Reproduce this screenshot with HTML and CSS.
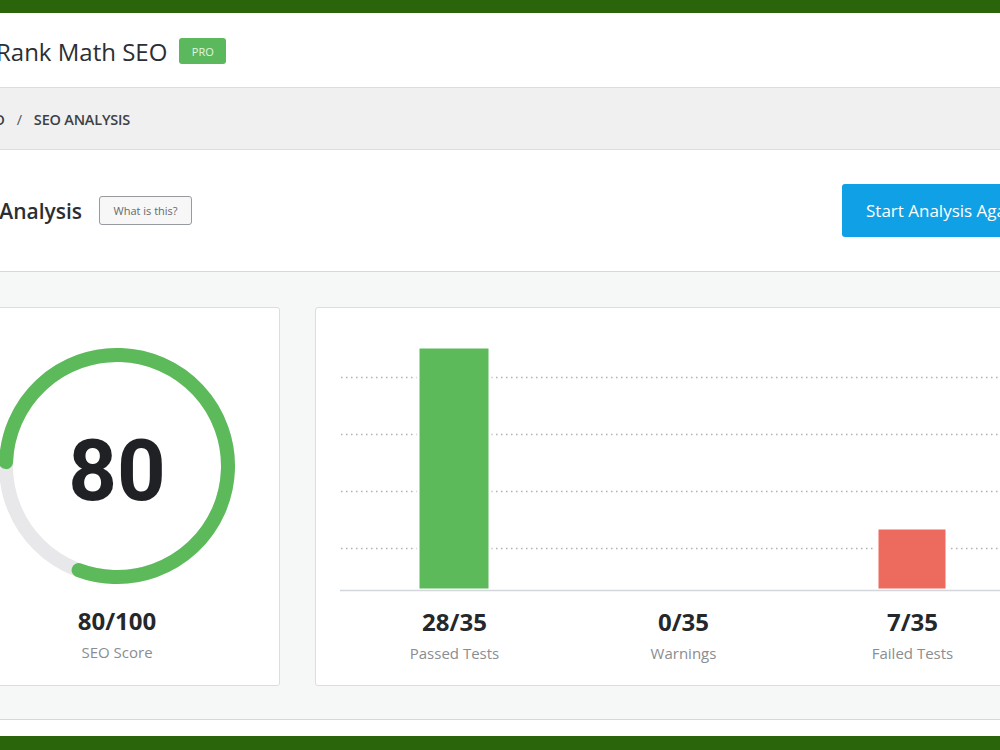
FILE: index.html
```html
<!DOCTYPE html>
<html lang="en">
<head>
<meta charset="utf-8">
<title>Rank Math SEO - SEO Analysis</title>
<link rel="stylesheet" href="styles.css">
</head>
<body>
<div class="frame-bar"></div>
<header class="app-header">
  <h1 class="app-title">Rank Math SEO</h1>
  <span class="badge-pro">PRO</span>
</header>
<nav class="breadcrumb">
  <span class="crumb">Dashboard</span>
  <span class="crumb-sep">/</span>
  <span class="crumb current">SEO Analysis</span>
</nav>
<main class="page">
  <section class="title-row">
    <div class="title-left">
      <h2 class="page-title">SEO Analysis</h2>
      <button class="help-btn">What is this?</button>
    </div>
    <button class="primary-btn">Start Analysis Again</button>
  </section>
  <section class="content">
    <div class="cards">
      <div class="card score-card">
        <div class="gauge">
          <svg class="gauge-svg" width="236" height="236" viewBox="0 0 236 236">
            <circle cx="118" cy="118" r="111" fill="none" stroke="#e8e8ea" stroke-width="14"/>
            <circle cx="118" cy="118" r="111" fill="none" stroke="#5cba5a" stroke-width="14" stroke-linecap="round" stroke-dasharray="557.9 697.4" transform="rotate(182 118 118)"/>
          </svg>
          <div class="gauge-value">80</div>
        </div>
        <div class="stat-num">80/100</div>
        <div class="stat-label">SEO Score</div>
      </div>
      <div class="card chart-card">
        <svg class="chart-svg" width="687" height="243" viewBox="0 0 687 243">
          <g stroke="#aeb1b5" stroke-width="1.5" stroke-dasharray="1.5 3.5">
            <line x1="1" y1="29.5" x2="687" y2="29.5"/>
            <line x1="1" y1="86.5" x2="687" y2="86.5"/>
            <line x1="1" y1="143.5" x2="687" y2="143.5"/>
            <line x1="1" y1="200.5" x2="687" y2="200.5"/>
          </g>
          <rect x="78" y="-1" width="72" height="243" fill="#5cba5a" stroke="#fff" stroke-width="3"/>
          <rect x="537" y="180" width="70" height="62" fill="#ec6a5e" stroke="#fff" stroke-width="3"/>
          <line x1="0" y1="242.5" x2="687" y2="242.5" stroke="#d3d6da" stroke-width="1.5"/>
        </svg>
        <div class="chart-labels">
          <div class="chart-label"><div class="stat-num">28/35</div><div class="stat-label">Passed Tests</div></div>
          <div class="chart-label"><div class="stat-num">0/35</div><div class="stat-label">Warnings</div></div>
          <div class="chart-label"><div class="stat-num">7/35</div><div class="stat-label">Failed Tests</div></div>
        </div>
      </div>
    </div>
  </section>
  <div class="page-foot"></div>
</main>
<div class="frame-bar bottom"></div>
</body>
</html>
```

FILE: styles.css
```css
* { box-sizing: border-box; }
html, body { margin: 0; padding: 0; }
body {
  width: 1000px;
  height: 750px;
  overflow: hidden;
  background: #ffffff;
  font-family: "Open Sans", "Noto Sans", Arial, sans-serif;
  color: #23282d;
}
.frame-bar {
  height: 13px;
  background: #2a640b;
}
.frame-bar.bottom { height: 14px; }

.app-header {
  height: 74px;
  display: flex;
  align-items: center;
  gap: 12px;
  margin-left: -4px;
  padding-top: 2px;
}
.app-title {
  margin: 0;
  font-size: 24px;
  font-weight: 500;
  color: #2b2f33;
}
.badge-pro {
  display: inline-flex;
  align-items: center;
  justify-content: center;
  width: 47px;
  height: 26px;
  border-radius: 3px;
  background: #5cb85c;
  color: #e3f4e1;
  font-size: 11px;
  font-weight: 500;
}

.breadcrumb {
  height: 63px;
  background: #f0f0f1;
  border-top: 1px solid #dcdde0;
  border-bottom: 1px solid #dcdde0;
  display: flex;
  align-items: center;
  gap: 12px;
  margin-left: -83px;
  padding-top: 2px;
  font-size: 14.5px;
  font-weight: 600;
  text-transform: uppercase;
  color: #3c4045;
  letter-spacing: -0.2px;
}
.crumb-sep { color: #50555a; font-weight: 400; }

.page {
  width: 1096px;
  margin-left: -46px;
}
.title-row {
  height: 122px;
  display: flex;
  align-items: center;
  justify-content: space-between;
  border-bottom: 1px solid #d6d8db;
}
.title-left {
  display: flex;
  align-items: center;
  gap: 17px;
}
.page-title {
  margin: 0;
  font-size: 21px;
  font-weight: 600;
  color: #2b2f33;
}
.help-btn {
  width: 93px;
  height: 29px;
  border: 1px solid #979a9e;
  border-radius: 3px;
  background: #f7f7f8;
  color: #65696d;
  font-family: inherit;
  font-size: 11px;
  font-weight: 500;
  padding: 0;
}
.primary-btn {
  width: 208px;
  height: 53px;
  border: none;
  border-radius: 3px;
  background: #10a0e6;
  color: #ffffff;
  font-family: inherit;
  font-size: 17px;
  font-weight: 500;
  text-align: left;
  padding: 0 0 0 24px;
  white-space: nowrap;
}

.content {
  background: #f6f7f7;
  padding: 35px 0 33px;
  border-bottom: 1px solid #d6d8db;
}
.cards {
  display: grid;
  grid-template-columns: 326px 1fr;
  gap: 35px;
}
.card {
  height: 379px;
  background: #ffffff;
  border: 1px solid #dcdde0;
  border-radius: 3px;
}
.score-card {
  display: flex;
  flex-direction: column;
  align-items: center;
  padding-top: 40px;
}
.gauge {
  display: grid;
  width: 236px;
  height: 236px;
}
.gauge > * { grid-area: 1 / 1; }
.gauge-svg { display: block; }
.gauge-value {
  align-self: center;
  justify-self: center;
  font-family: Roboto, "Open Sans", sans-serif;
  font-size: 85px;
  font-weight: 700;
  color: #1f2124;
  line-height: 1;
  padding-top: 10px;
}
.stat-num {
  font-family: "Open Sans", sans-serif;
  font-size: 24px;
  font-weight: 700;
  color: #25282b;
  line-height: 29px;
}
.stat-label {
  font-size: 15px;
  color: #8a8d91;
  line-height: 20px;
  margin-top: 7px;
}
.score-card .stat-num { margin-top: 22px; }

.chart-card {
  padding: 40px 24px 0;
}
.chart-svg { display: block; overflow: visible; }
.chart-labels {
  display: grid;
  grid-template-columns: repeat(3, 1fr);
  width: 687px;
  margin-top: 16px;
}
.chart-label { text-align: center; }
.page-foot { height: 16px; background: #ffffff; }
```
